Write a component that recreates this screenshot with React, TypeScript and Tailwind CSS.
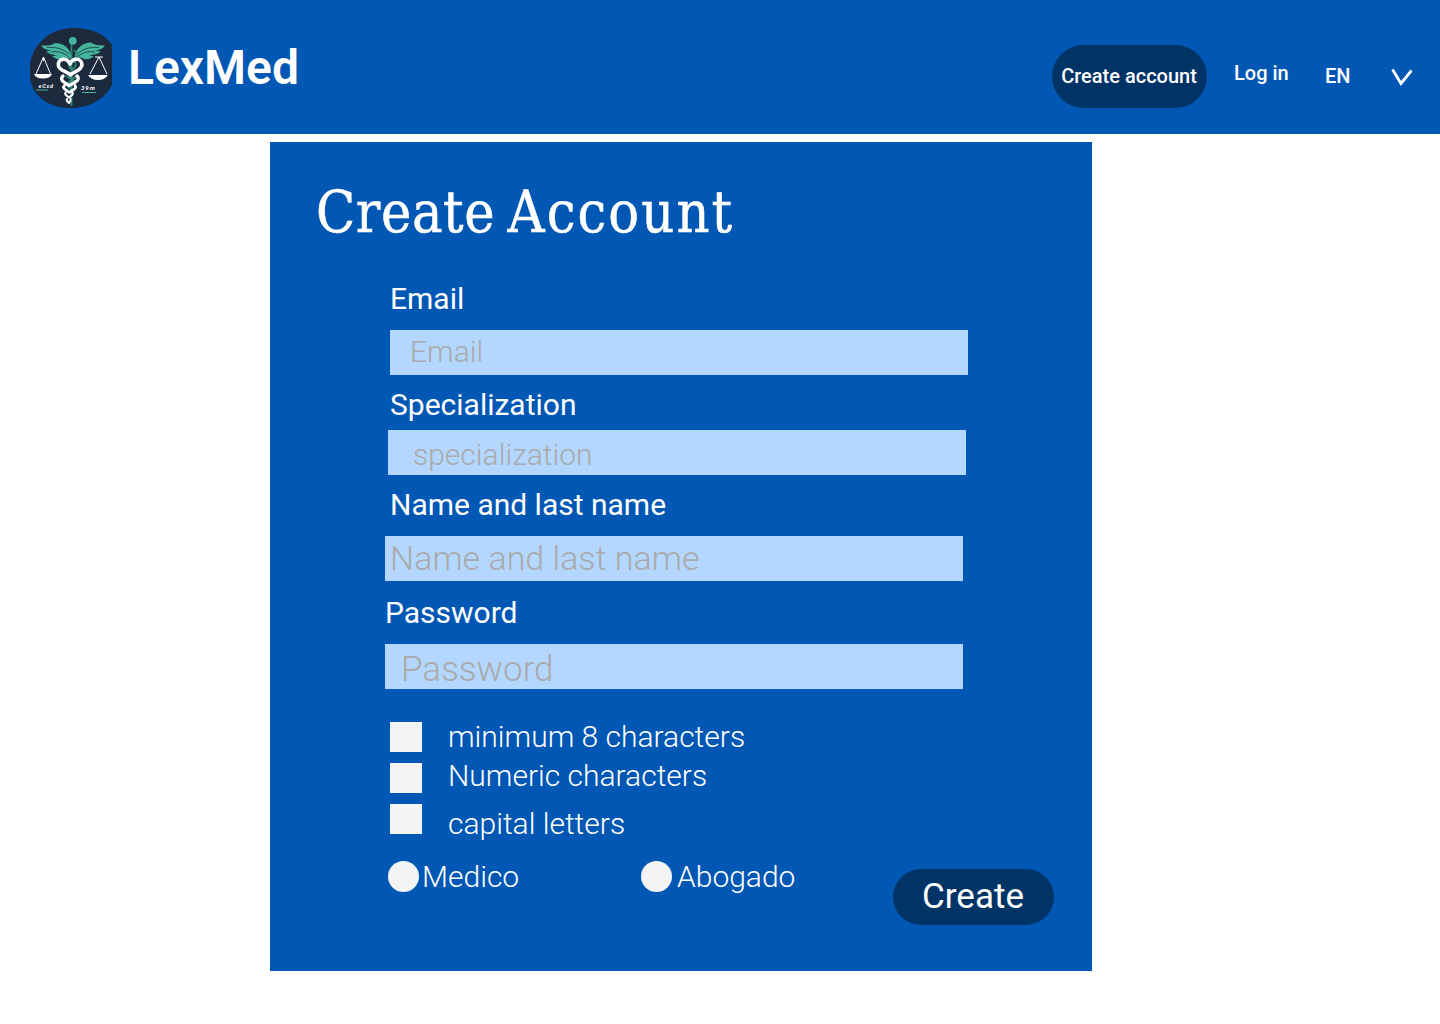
import React from "react";

function Logo() {
  return (
    <svg width="82" height="80" viewBox="0 0 82 80" className="ml-[30px] mt-7 shrink-0">
      <defs>
        <linearGradient id="disc" x1="0" y1="0" x2="1" y2="1">
          <stop offset="0" stopColor="#20283a" />
          <stop offset="1" stopColor="#182b3e" />
        </linearGradient>
      </defs>
      <path d="M44 0C60 0 74 5 82 17V57C75 71 59 80 41 80C20 80 3 70 0 50V36C3 15 21 0 44 0Z" fill="url(#disc)" />
      <g fill="#43b59b">
        <circle cx="42.8" cy="12.8" r="3.9" />
        <path d="M41 27C39 19 33 15 25 15Q22 18 11 17.5Q14 22 21 22.5L16 23.5Q20 27 27 27L22 28.5Q27 32 32 31Q34 28 41 31Z" />
        <path d="M45 27C47 19 53 15 61 14.5Q65 18 75 17.5Q72 22 65 22.5L71 23.5Q67 27 59 27L64 28.5Q59 32 54 31Q51 28 45 31Z" />
      </g>
      <path d="M17 19.5Q30 18 39 26M21 24Q31 22 39 29M69 19.5Q56 18 47 26M65 24Q55 22 47 29" stroke="#25404f" strokeWidth="0.9" fill="none" />
      <path d="M41.5 16V78M44 22Q51 27 42 32Q36 37 42 42M42 42Q49 37 43 32M36 48L46 54M46 48L37 56M38 58L43 64" stroke="#2d8a78" strokeWidth="1.8" fill="none" />
      <g stroke="#ffffff" fill="none" strokeLinejoin="round" strokeLinecap="round">
        <path d="M40 36C37 29 27 30 28.500 38C29.500 43 37 43 40.500 47C44 43 51 43 52 37C52 30 43 29 40 36Z" strokeWidth="3.6" />
        <path d="M33 48C29 52 34 54 38 57Q39 58 40 57C45 54 51 52 47 48" strokeWidth="3.2" />
        <path d="M34.500 57.500C32 60 35 61 38 63.500Q39.500 65 41 63.500C44 61 47 60 45 57.500" strokeWidth="2.8" />
        <path d="M35.500 64.500C34 67 37 67 39 69.500C41 67 44 67 42.500 64.500M37 71Q36 73 39 75Q41 73 40.500 71" strokeWidth="2.1" />
      </g>
      <path d="M13.500 29L6 46M13.500 29L20.500 46M13.500 29V33M69 29L60 46M69 29L77 46M65 29H73" stroke="#ffffff" strokeWidth="1" fill="none" />
      <path d="M4 46H22Q20 50.500 13 50.500Q6 50.500 4 46ZM58 47H78Q75 52 68 52Q61 52 58 47Z" fill="#ffffff" />
      <text x="8.500" y="60" fontSize="5.500" fontFamily="Roboto" fontWeight="700" fontStyle="italic" fill="#ffffff" letterSpacing="0.8">eCsd</text>
      <text x="51" y="61.500" fontSize="6" fontFamily="Roboto" fontWeight="700" fontStyle="italic" fill="#ffffff" letterSpacing="1">39m</text>
      <path d="M6 62H18M52 64.500H66" stroke="#43b59b" strokeWidth="1" />
    </svg>
  );
}

function Header() {
  return (
    <header className="flex h-[134px] items-start bg-[#0057b4]">
      <Logo />
      <h1 className="ml-4 mt-[39px] text-[48px] font-semibold leading-[58px]">LexMed</h1>
      <nav className="ml-auto flex items-start text-[20px] font-medium leading-6">
        <button className="mt-[45px] h-[63px] w-[155px] whitespace-nowrap rounded-[31.5px] bg-[#003366] pb-0.5 pr-px text-center">
          Create account
        </button>
        <a className="ml-[27px] mt-[61px] w-[91px]">Log in</a>
        <span className="mt-16 w-[66px]">EN</span>
        <svg width="22" height="19" viewBox="0 0 22 19" className="mr-[27px] mt-[68px]">
          <path d="M1.5 1.5L10 15.5L20.5 2.5" fill="none" stroke="white" strokeWidth="2.8" />
        </svg>
      </nav>
    </header>
  );
}

function Field({ label, placeholder, labelClass, inputClass }: {
  label: string;
  placeholder: string;
  labelClass: string;
  inputClass: string;
}) {
  return (
    <label className="flex flex-col">
      <span className={`text-[30px] leading-9 ${labelClass}`}>{label}</span>
      <input
        placeholder={placeholder}
        className={`h-[45px] w-[578px] bg-[#b3d7ff] font-light outline-none placeholder:text-[#aaaaaa] placeholder:opacity-100 ${inputClass}`}
      />
    </label>
  );
}

function Rule({ text, className }: { text: string; className: string }) {
  return (
    <div className="flex h-[41px] items-start">
      <span className="h-[30px] w-8 bg-[#f4f4f4]" />
      <span className={`ml-[26px] ${className}`}>{text}</span>
    </div>
  );
}

export default function App() {
  return (
    <div className="h-[1024px] w-[1440px] overflow-hidden bg-white font-['Roboto',sans-serif] text-white">
      <Header />
      <main className="ml-[270px] mt-2 h-[829px] w-[822px] overflow-hidden bg-[#0057b4]">
        <h2 className="ml-[46px] mt-[30px] whitespace-nowrap font-['DejaVu_Serif',serif] text-[57px] font-normal leading-[80px] tracking-[0.6px] [-webkit-text-stroke:0.5px_white] [font-stretch:condensed] [word-spacing:-4.5px]">
          Create <span className="tracking-[2.1px]">Account</span>
        </h2>
        <form className="mt-[29px]">
          <Field label="Email" placeholder="Email" labelClass="ml-[120px]" inputClass="mt-[13px] ml-[120px] pl-5 pt-[3px] pb-[6px] text-[30px] leading-9" />
          <div className="h-3" />
          <Field label="Specialization" placeholder="specialization" labelClass="ml-[120px]" inputClass="mt-[7px] ml-[118px] pl-[25px] pt-[6px] pb-[3px] text-[30px] leading-9" />
          <div className="h-3" />
          <Field label="Name and last name" placeholder="Name and last name" labelClass="ml-[120px]" inputClass="mt-[13px] ml-[115px] pl-[5px] pt-[2px] pb-[3px] text-[34px] leading-10" />
          <div className="h-3.5" />
          <Field label="Password" placeholder="Password" labelClass="ml-[115px]" inputClass="mt-[13px] ml-[115px] pl-4 pt-[6px] text-[35px] leading-[39px]" />
          <div className="ml-[120px] mt-[33px] text-[30px] font-light leading-9">
            <Rule text="minimum 8 characters" className="-mt-[3px]" />
            <Rule text="Numeric characters" className="-mt-[5px]" />
            <Rule text="capital letters" className="mt-[2px]" />
          </div>
          <div className="ml-[118px] mt-4 flex items-start text-[30px] font-light leading-9">
            <span className="size-[31px] rounded-full bg-[#f4f4f4]" />
            <span className="-mt-[2px] ml-[3px] w-[219px]">Medico</span>
            <span className="size-[31px] rounded-full bg-[#f4f4f4]" />
            <span className="-mt-[2px] ml-[5px] w-[216px]">Abogado</span>
            <button type="button" className="mt-2 h-14 w-[161px] rounded-[28px] bg-[#003366] pr-px text-[35px] font-normal leading-[54px]">
              Create
            </button>
          </div>
        </form>
      </main>
    </div>
  );
}
